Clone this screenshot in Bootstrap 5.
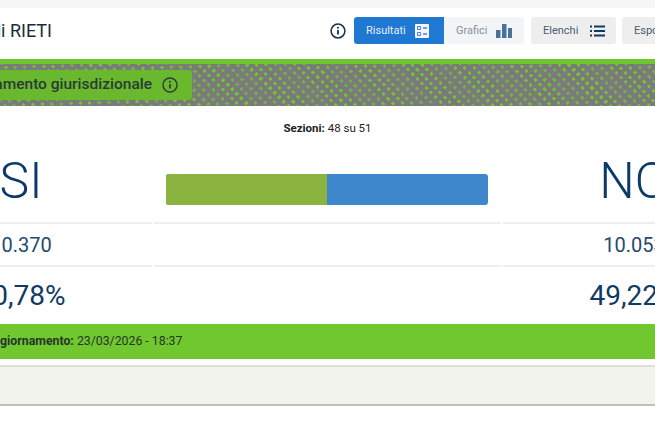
<!DOCTYPE html>
<html lang="it">
<head>
  <meta charset="UTF-8">
  <title>Referendum - Comune di RIETI</title>
  <link href="https://cdn.jsdelivr.net/npm/bootstrap@5.3.0/dist/css/bootstrap.min.css" rel="stylesheet">
  <style>
    body {
      background: #fff;
      font-family: Roboto, "Liberation Sans", sans-serif;
      color: #17324d;
      overflow: hidden;
      height: 437px;
    }
    .page-wrap { width: 875px; margin-left: -110px; padding-top: 8px; }
    .top-strip { height: 8px; background: #f6f6f6; margin-top: -8px; }
    .head-row { height: 51px; padding-top: 9px; }
    .head-title { width: 162px; height: 27px; line-height: 28px; font-size: 18px; color: #1c2b39; white-space: nowrap; }
    .info-ico { width: 16px; height: 16px; }
    .tool-btn {
      height: 27px; font-size: 11px; padding: 2px 0 0 12px; border: 0; border-radius: 3px;
      background: #eee; color: #4b5d70;
    }
    .tool-btn svg { width: 16px; height: 14px; margin-top: -2px; }
    .btn-res { width: 90px; background: #1f78d1; color: #e3effa; border-radius: 3px 0 0 3px; }
    .btn-gra { width: 80px; background: #f3f4f6; color: #8292a2; border-radius: 0 3px 3px 0; }
    .btn-ele { width: 85px; margin-left: 7px; gap: 11px; }
    .btn-esp { width: 100px; margin-left: 6px; margin-right: 43px; }
    .hatch {
      height: 47px; border-top: 5px solid #6fc72e;
      background-color: #6fc72e;
      background-image:
        repeating-linear-gradient(45deg, rgba(124,124,124,.3) 0 19px, transparent 19px 37px),
        repeating-linear-gradient(45deg, #7a7a7a 0 4px, transparent 4px 6.9px),
        repeating-linear-gradient(-45deg, #7c7c7c 0 3.6px, transparent 3.6px 6.5px);
    }
    .pill {
      width: 302px; height: 30px; margin-top: 6px; background: #6ab82e; border-radius: 0 3px 3px 0;
      font-size: 15.5px; font-weight: 500; color: #2b3a35; padding-right: 14px; gap: 10px;
    }
    .pill svg { width: 16px; height: 16px; }
    .sez-line { height: 44px; font-size: 11.5px; color: #222; padding-top: 14px; }
    .res-grid { display: grid; grid-template-columns: 262px 347px 262px; column-gap: 2px; }
    .res-big { height: 72px; font-size: 50px; font-weight: 300; color: #0a3a6b; line-height: 62px; }
    .bar-cell { height: 72px; padding: 24px 13px 0 12px; }
    .res-bar { height: 31px; border-radius: 3px; background: #3f87cd; }
    .res-bar div { background: #8ab33f; }
    .res-num { height: 43px; border-top: 2px solid #eee; font-size: 20px; color: #254a6e; line-height: 43px; }
    .res-pct { height: 59px; border-top: 2px solid #eee; font-size: 28px; color: #0f3a64; line-height: 58px; }
    .upd-bar { height: 35px; background: #70c82e; font-size: 12.3px; color: #27352a; padding-left: 57px; }
    .foot-bar { height: 41px; margin-top: 6px; background: #f3f3ee; border-top: 2px solid #dededb; border-bottom: 2px solid #c0c0bd; }
  </style>
</head>
<body>
  <div class="page-wrap">
    <div class="top-strip"></div>
    <div class="head-row d-flex align-items-start">
      <div class="head-title text-end">Comune di RIETI</div>
      <div class="d-flex align-items-center ms-auto">
        <svg class="info-ico me-2" viewBox="0 0 16 16" fill="none" stroke="#17324d" stroke-width="1.5"><circle cx="8" cy="8" r="6.9"/><path d="M8 7v4.6" stroke-width="1.8"/><circle cx="8" cy="4.7" r="1" fill="#17324d" stroke="none"/></svg>
        <div class="d-flex">
          <button class="btn tool-btn btn-res d-flex align-items-center gap-2">Risultati
            <svg viewBox="0 0 16 14"><rect x="1" y="0" width="14" height="14" rx="1" fill="#f2f5fd"/><path d="M3.5 2.5h3v3h-3zM3.5 8.5h3v3h-3z" fill="none" stroke="#4a7fd0"/><path d="M9 4h4M9 10h4" stroke="#4a7fd0" stroke-width="1.4"/></svg>
          </button>
          <button class="btn tool-btn btn-gra d-flex align-items-center gap-2">Grafici
            <svg viewBox="0 0 16 14"><path d="M0 6h4.5v8H0zM6 0h4.5v14H6zM12 4h4v10h-4z" fill="#48729c"/></svg>
          </button>
        </div>
        <button class="btn tool-btn btn-ele d-flex align-items-center">Elenchi
          <svg viewBox="0 0 16 14"><path d="M1 2.5h2M1 7h2M1 11.5h2M5 2.5h11M5 7h11M5 11.5h11" stroke="#0f3a64" stroke-width="2" fill="none"/></svg>
        </button>
        <button class="btn tool-btn btn-esp d-flex align-items-center">Esporta</button>
      </div>
    </div>
    <div class="hatch">
      <div class="pill d-flex align-items-center justify-content-end">Accertamento giurisdizionale
        <svg viewBox="0 0 16 16" fill="none" stroke="#2b3a35" stroke-width="1.4"><circle cx="8" cy="8" r="7"/><path d="M8 7v4.6" stroke-width="1.7"/><circle cx="8" cy="4.7" r="1" fill="#2b3a35" stroke="none"/></svg>
      </div>
    </div>
    <div class="sez-line text-center"><strong>Sezioni:</strong> 48 su 51</div>
    <div class="res-grid text-center">
      <div class="res-big">SI</div>
      <div class="bar-cell"><div class="res-bar d-flex overflow-hidden"><div style="width: 50%"></div></div></div>
      <div class="res-big">NO</div>
      <div class="res-num">10.370</div>
      <div class="res-num"></div>
      <div class="res-num">10.053</div>
      <div class="res-pct">50,78%</div>
      <div class="res-pct"></div>
      <div class="res-pct">49,22%</div>
    </div>
    <div class="upd-bar d-flex align-items-center"><strong>Ultimo aggiornamento:</strong>&nbsp;23/03/2026 - 18:37</div>
    <div class="foot-bar"></div>
  </div>
</body>
</html>
